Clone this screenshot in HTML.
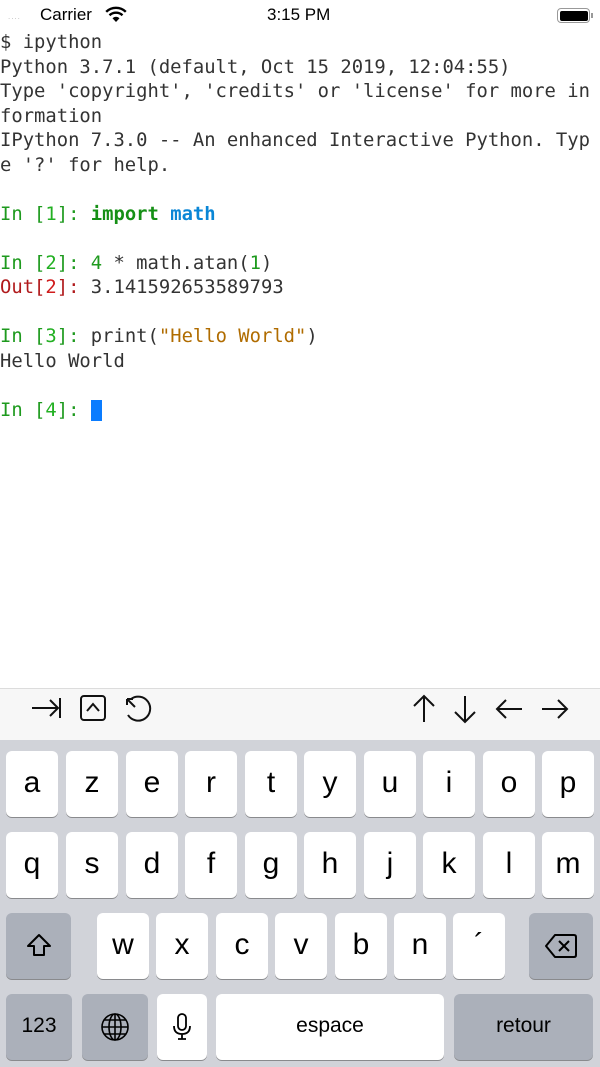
<!DOCTYPE html>
<html><head><meta charset="utf-8"><style>
*{margin:0;padding:0;box-sizing:border-box}
body{width:600px;height:1067px;background:#fff;position:relative;overflow:hidden;font-family:"Liberation Sans",sans-serif}
.sb{position:absolute;top:0;left:0;width:600px;height:29px;font-size:17px;color:#000}
.term{position:absolute;top:31px;left:0;font-family:"DejaVu Sans Mono","Liberation Mono",monospace;font-size:18.85px;line-height:24.5px;color:#333;white-space:pre}
.g{color:#1e9a1e}.gb{color:#169016;font-weight:bold}.bl{color:#0a86d6;font-weight:bold}.r{color:#b0191b}.rb{color:#d01c1c}.s{color:#b06c00}.n{color:#22b022}
.tb{position:absolute;top:688px;left:0;width:600px;height:52px;background:#f7f7f7;border-top:1px solid #dcdcdc}
.kb{position:absolute;top:740px;left:0;width:600px;height:327px;background:#d1d3d9}
.k{position:absolute;background:#fff;border-radius:6px;box-shadow:0 1px 0 #898a8d;font-size:30px;color:#000;text-align:center;line-height:64px;height:66px;width:52px}
.d{background:#abb0ba}
</style></head><body>
<div class="sb">
<span style="position:absolute;left:8px;top:12px;font-size:8px;color:#bbb;letter-spacing:1px">....</span>
<span style="position:absolute;left:40px;top:5px">Carrier</span>
<svg style="position:absolute;left:105px;top:6px" width="22" height="17" viewBox="0 0 22 17"><path d="M11 16 L7.5 12.2 A5 5 0 0 1 14.5 12.2Z" fill="#000"/><path d="M4.5 9.3 A9.5 9.5 0 0 1 17.5 9.3" stroke="#000" stroke-width="2.4" fill="none"/><path d="M1.2 5.8 A14 14 0 0 1 20.8 5.8" stroke="#000" stroke-width="2.4" fill="none"/></svg>
<span style="position:absolute;left:267px;top:5px">3:15 PM</span>
<div style="position:absolute;left:557px;top:8px;width:33px;height:15px;border:1.5px solid #999;border-radius:4px;padding:1.5px"><div style="width:100%;height:100%;background:#000;border-radius:2px"></div></div>
<div style="position:absolute;left:591px;top:13px;width:2px;height:5px;background:#999"></div>
</div>
<div class="term">$ ipython
Python 3.7.1 (default, Oct 15 2019, 12:04:55)
Type 'copyright', 'credits' or 'license' for more in
formation
IPython 7.3.0 -- An enhanced Interactive Python. Typ
e '?' for help.

<span class="g">In [</span><span class="n">1</span><span class="g">]: </span><span class="gb">import</span> <span class="bl">math</span>

<span class="g">In [</span><span class="n">2</span><span class="g">]: 4</span> * math.atan(<span class="g">1</span>)
<span class="r">Out[</span><span class="rb">2</span><span class="r">]:</span> 3.141592653589793

<span class="g">In [</span><span class="n">3</span><span class="g">]: </span>print(<span class="s">"Hello World"</span>)
Hello World

<span class="g">In [</span><span class="n">4</span><span class="g">]: </span><span style="background:#0a7cff;color:#0a7cff"> </span></div>
<div class="tb">
<svg width="600" height="52" style="position:absolute;left:0;top:-1px" fill="none" stroke="#111" stroke-width="2">
<path d="M32 20H58M50 12L58 20L50 28M60 10V30"/>
<rect x="81" y="8" width="24" height="24" rx="3"/><path d="M87 23L93 16L99 23"/>
<path d="M131 11A12 12 0 1 1 128 27" /><path d="M127 11L135 19M127 11V17M127 11H133"/>
<path d="M424 34V8M414 18L424 8L434 18"/>
<path d="M465 8V34M455 24L465 34L475 24"/>
<path d="M522 21H497M506 12L497 21L506 30"/>
<path d="M542 21H567M558 12L567 21L558 30"/>
</svg></div>
<div class="kb"></div>
<div class="k" style="left:6px;top:751px">a</div><div class="k" style="left:66px;top:751px">z</div><div class="k" style="left:126px;top:751px">e</div><div class="k" style="left:185px;top:751px">r</div><div class="k" style="left:245px;top:751px">t</div><div class="k" style="left:304px;top:751px">y</div><div class="k" style="left:364px;top:751px">u</div><div class="k" style="left:423px;top:751px">i</div><div class="k" style="left:483px;top:751px">o</div><div class="k" style="left:542px;top:751px">p</div>
<div class="k" style="left:6px;top:832px">q</div><div class="k" style="left:66px;top:832px">s</div><div class="k" style="left:126px;top:832px">d</div><div class="k" style="left:185px;top:832px">f</div><div class="k" style="left:245px;top:832px">g</div><div class="k" style="left:304px;top:832px">h</div><div class="k" style="left:364px;top:832px">j</div><div class="k" style="left:423px;top:832px">k</div><div class="k" style="left:483px;top:832px">l</div><div class="k" style="left:542px;top:832px">m</div>
<div class="k d" style="left:6px;top:913px;width:65px"><svg width="30" height="30" viewBox="0 0 30 30" style="margin-top:18px"><path d="M15 4L4 15H10V24H20V15H26Z" fill="none" stroke="#000" stroke-width="2" stroke-linejoin="round"/></svg></div>
<div class="k" style="left:97px;top:913px">w</div><div class="k" style="left:156px;top:913px">x</div><div class="k" style="left:216px;top:913px">c</div><div class="k" style="left:275px;top:913px">v</div><div class="k" style="left:335px;top:913px">b</div><div class="k" style="left:394px;top:913px">n</div><div class="k" style="left:453px;top:913px">´</div>
<div class="k d" style="left:529px;top:913px;width:64px"><svg width="34" height="26" viewBox="0 0 34 26" style="margin-top:20px"><path d="M11 2H30Q32 2 32 4V22Q32 24 30 24H11L2 13Z" fill="none" stroke="#000" stroke-width="2" stroke-linejoin="round"/><path d="M15 8L25 18M25 8L15 18" stroke="#000" stroke-width="2"/></svg></div>
<div class="k d" style="left:6px;top:994px;width:66px;font-size:21px">123</div>
<div class="k d" style="left:82px;top:994px;width:66px"><svg width="30" height="30" viewBox="0 0 30 30" style="margin-top:18px" fill="none" stroke="#000" stroke-width="1.6"><circle cx="15" cy="15" r="13"/><ellipse cx="15" cy="15" rx="6" ry="13"/><path d="M15 2V28M2 15H28M4 8H26M4 22H26"/></svg></div>
<div class="k" style="left:157px;top:994px;width:50px"><svg width="20" height="30" viewBox="0 0 20 30" style="margin-top:18px" fill="none" stroke="#000" stroke-width="1.8"><rect x="6" y="2" width="8" height="16" rx="4"/><path d="M2 14Q2 22 10 22Q18 22 18 14M10 22V27M6 27H14"/></svg></div>
<div class="k" style="left:216px;top:994px;width:228px;font-size:21px">espace</div>
<div class="k d" style="left:454px;top:994px;width:139px;font-size:21px">retour</div>
</body></html>
